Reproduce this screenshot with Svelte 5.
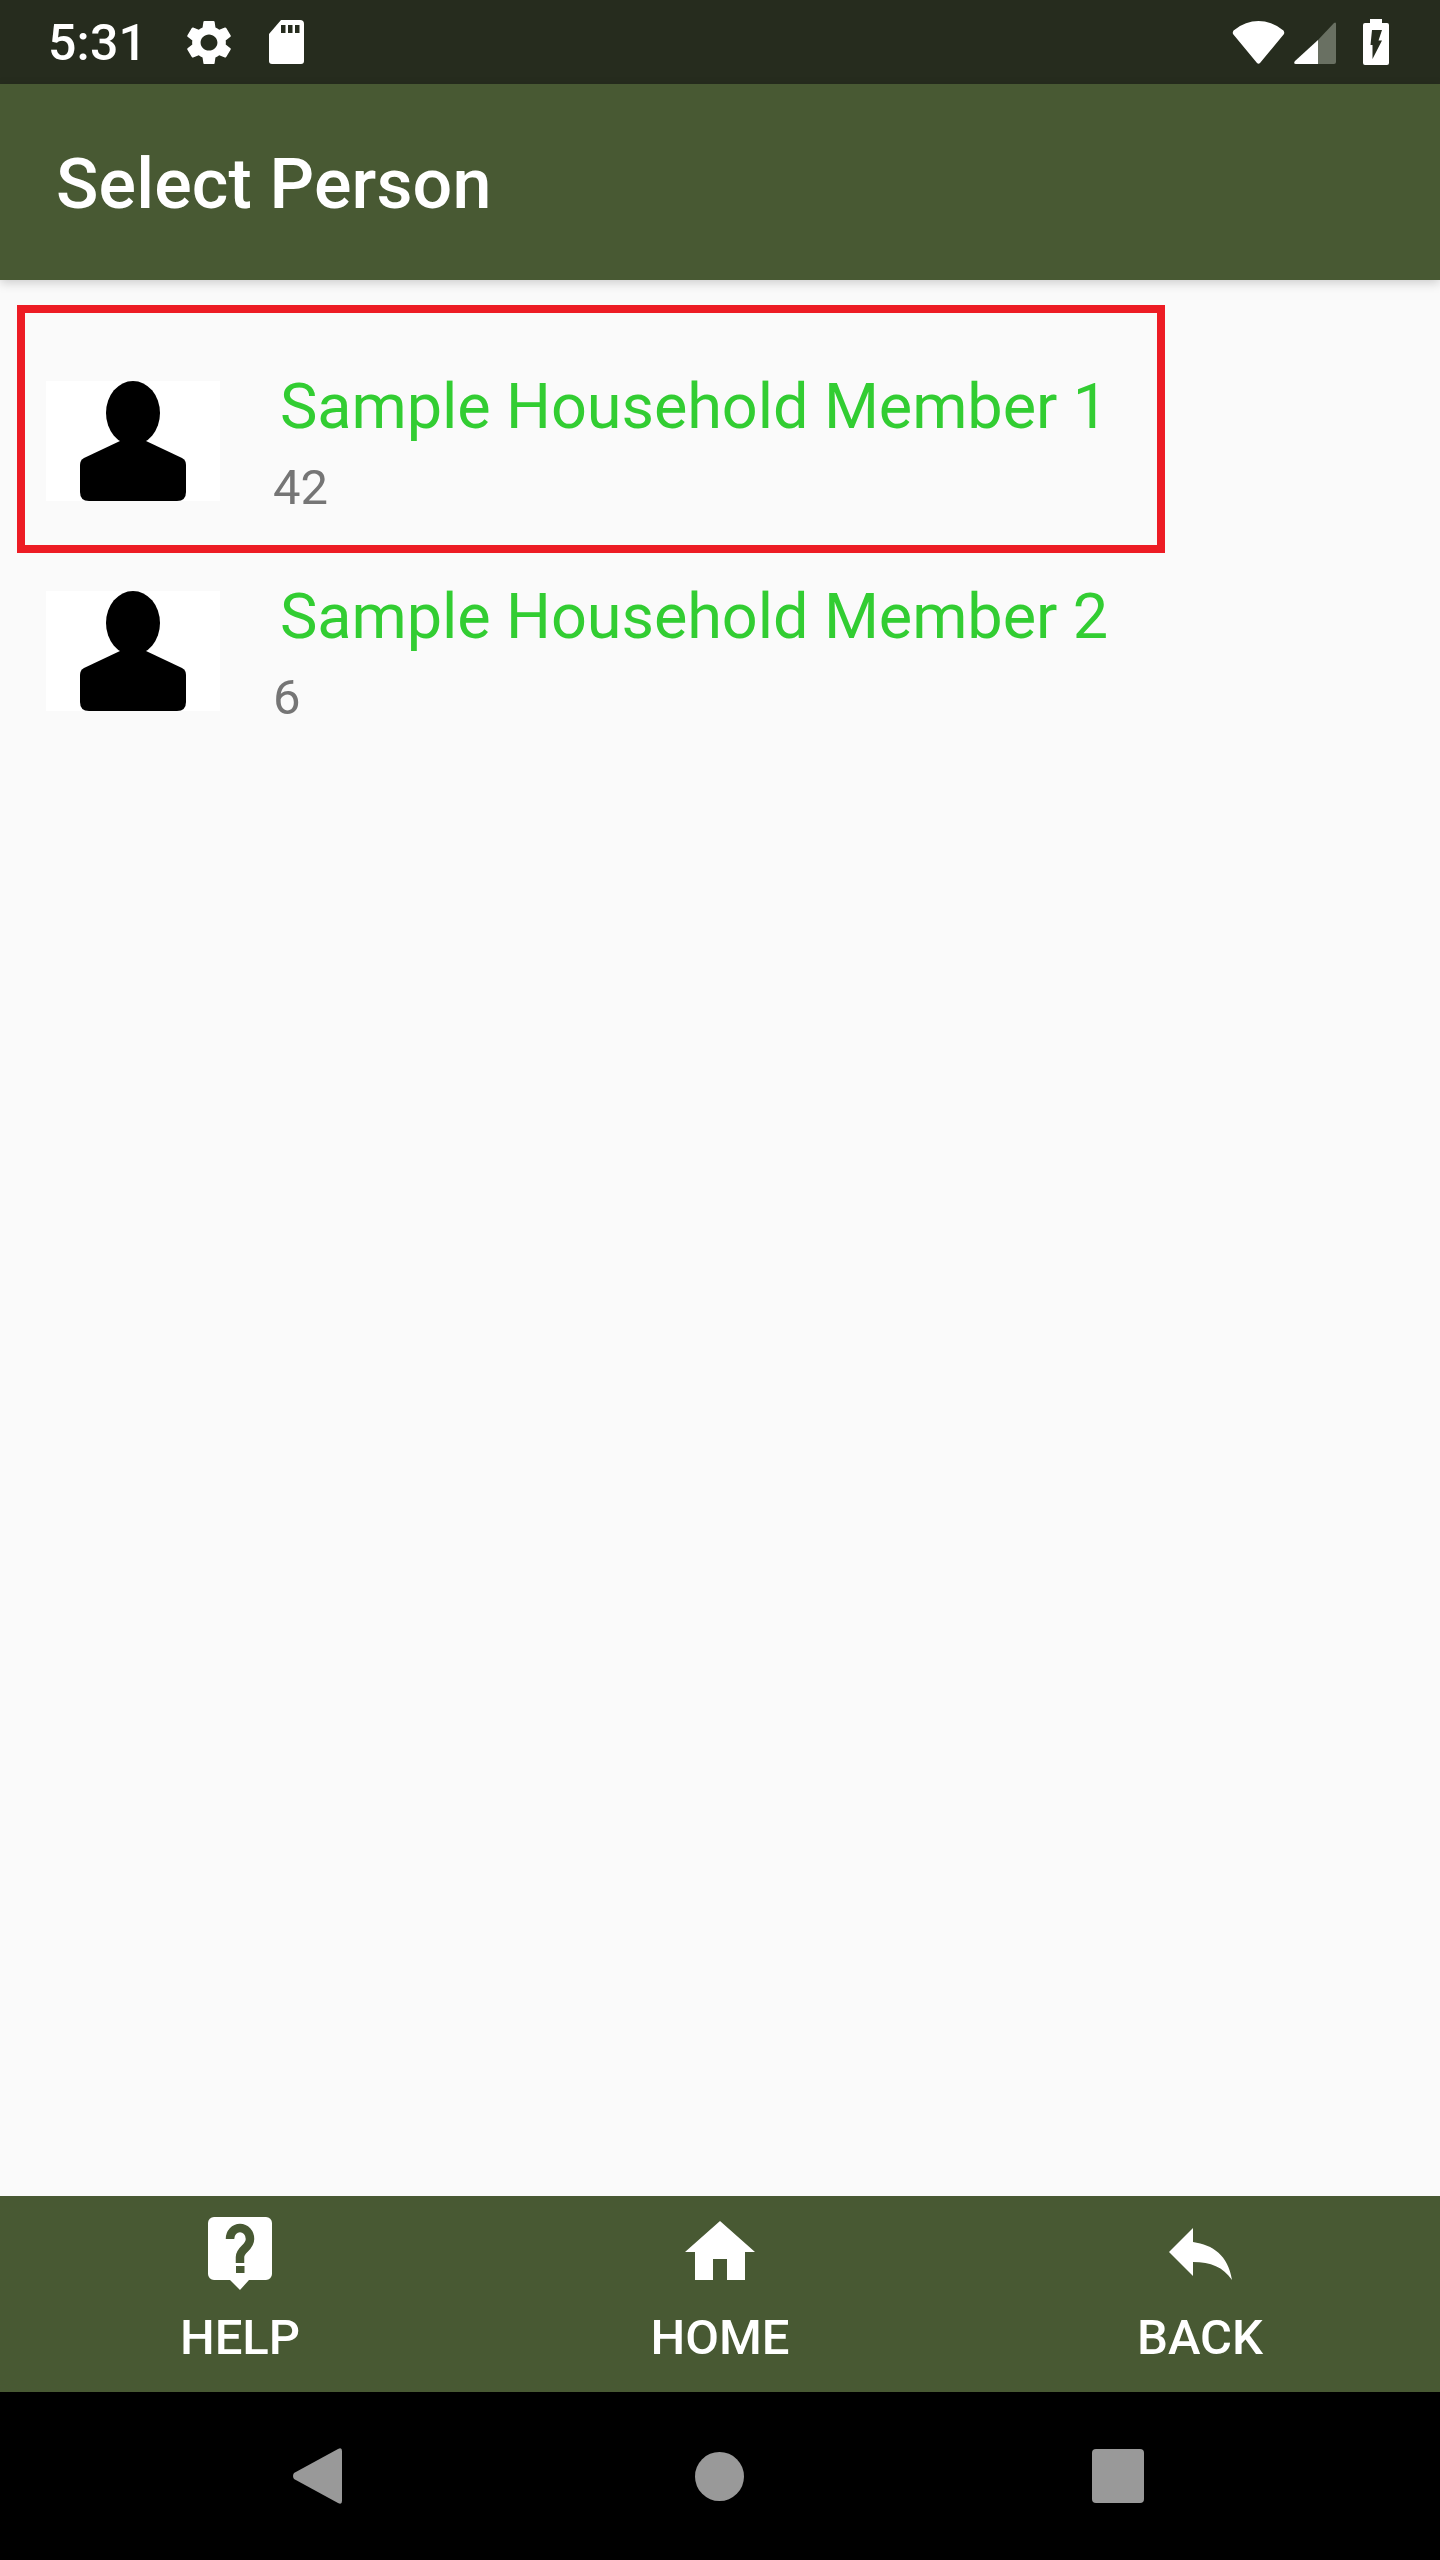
<script>
  const people = [
    { name: 'Sample Household Member 1', age: '42' },
    { name: 'Sample Household Member 2', age: '6' }
  ];
</script>

<div class="screen">
  <header class="status">
    <span class="time">5:31</span>
    <svg class="gear" width="44" height="45" viewBox="2.6 2 18.8 20" preserveAspectRatio="none"><path fill="#fff" d="M19.14 12.94c.04-.3.06-.61.06-.94 0-.32-.02-.64-.07-.94l2.03-1.58c.18-.14.23-.41.12-.61l-1.92-3.32c-.12-.22-.37-.29-.59-.22l-2.39.96c-.5-.38-1.03-.7-1.62-.94l-.36-2.54c-.04-.24-.24-.41-.48-.41h-3.84c-.24 0-.43.17-.47.41l-.36 2.54c-.59.24-1.13.57-1.62.94l-2.39-.96c-.22-.08-.47 0-.59.22L2.74 8.87c-.12.21-.08.47.12.61l2.03 1.58c-.05.3-.09.63-.09.94s.02.64.07.94l-2.03 1.58c-.18.14-.23.41-.12.61l1.92 3.32c.12.22.37.29.59.22l2.39-.96c.5.38 1.03.7 1.62.94l.36 2.54c.05.24.24.41.48.41h3.84c.24 0 .44-.17.47-.41l.36-2.54c.59-.24 1.13-.56 1.62-.94l2.39.96c.22.08.47 0 .59-.22l1.92-3.32c.12-.22.07-.47-.12-.61l-2.01-1.58zM12 15.6c-1.98 0-3.6-1.62-3.6-3.6s1.62-3.6 3.6-3.6 3.6 1.62 3.6 3.6-1.62 3.6-3.6 3.6z"/></svg>
    <svg class="sd" width="35" height="44" viewBox="0 0 35 44"><path fill="#fff" d="M12 0H31a4 4 0 0 1 4 4V41a3 3 0 0 1-3 3H3a3 3 0 0 1-3-3V14Z"/><path fill="#262c1e" d="M12 5h4.500v8H12zM19 5h4.500v8H19zM26 5h4.500v8H26z"/></svg>
    <div class="status-right">
      <svg class="wifi" width="53" height="43" viewBox="0 0 53 43"><path fill="#fff" d="M1 13Q0 10 3 8.500A37 37 0 0 1 50 8.500Q53 10 52 13L28 42Q26.500 43.500 25 42Z"/></svg>
      <svg class="signal" width="42" height="42" viewBox="0 0 42 42"><path fill="#fff" d="M24 18V42H2Q-1 42 1 39Z"/><path fill="#697062" d="M24 18L40 1Q42 -.5 42 2V40Q42 42 40 42H24Z"/></svg>
      <svg class="battery" width="26" height="46" viewBox="0 0 26 46"><path fill="#fff" d="M7 0H19V4H24a2 2 0 0 1 2 2V44a2 2 0 0 1-2 2H2a2 2 0 0 1-2-2V6a2 2 0 0 1 2-2H7Z"/><path fill="#262c1e" d="M9 11H19L15.500 21.500H19L9.500 40V26H7.500Z"/></svg>
    </div>
  </header>

  <div class="appbar"><h1>Select Person</h1></div>

  <main class="list">
    <div class="highlight"></div>
    {#each people as p}
      <div class="row">
        <svg class="avatar" width="174" height="120" viewBox="0 0 174 120">
          <rect width="174" height="120" fill="#fff"/>
          <ellipse cx="87" cy="32" rx="27" ry="32"/>
          <path d="M74 60L38 77Q34 79 34 84V111Q34 120 43 120H131Q140 120 140 111V84Q140 79 136 77L100 60Z"/>
        </svg>
        <div class="info">
          <div class="name">{p.name}</div>
          <div class="age">{p.age}</div>
        </div>
      </div>
    {/each}
  </main>

  <nav class="tabs">
    <button class="tab">
      <svg width="64" height="73" viewBox="0 0 64 73">
        <path fill="#fff" d="M6 0H58a6 6 0 0 1 6 6V57a6 6 0 0 1-6 6H41L32 73 22 63H6a6 6 0 0 1-6-6V6a6 6 0 0 1 6-6Z"/>
        <path fill="none" stroke="#485933" stroke-width="8.500" d="M22 22a10 11 0 0 1 20 0c0 9-10 10-10 18v6"/>
        <path fill="#485933" d="M28 49h8.500v7H28z"/>
      </svg>
      <span>HELP</span>
    </button>
    <button class="tab">
      <svg width="70" height="73" viewBox="0 0 70 73">
        <path fill="#fff" d="M35 4L70 35H60V63H42V42H28V63H10V35H0Z"/>
      </svg>
      <span>HOME</span>
    </button>
    <button class="tab">
      <svg width="63" height="73" viewBox="0 0 63 73">
        <path fill="#fff" d="M24 11V25C44 28 59 38 63 63 54 50 42 45 24 45V59L0 35Z"/>
      </svg>
      <span>BACK</span>
    </button>
  </nav>

  <footer class="sysnav">
    <svg class="back" width="49" height="56" viewBox="0 0 49 56"><path fill="#999" d="M1 31Q-1 28 1 25L45 1Q49 -1 49 3V53Q49 57 45 55Z" /></svg>
    <svg class="home" width="49" height="49" viewBox="0 0 49 49"><circle cx="24.500" cy="24.500" r="24.500" fill="#999"/></svg>
    <div class="recent"></div>
  </footer>
</div>

<style>
  :global(body) { margin: 0; background: #fafafa; }
  * { box-sizing: border-box; }
  .screen {
    width: 1440px;
    height: 2560px;
    display: flex;
    flex-direction: column;
    font-family: Roboto, "Liberation Sans", sans-serif;
    background: #fafafa;
    overflow: hidden;
  }
  svg { display: block; flex: none; }

  .status {
    height: 84px;
    flex: none;
    background: #262c1e;
    display: flex;
    align-items: center;
    padding: 0 51px;
    color: #fff;
  }
  .time { font-size: 50px; line-height: 58px; font-weight: 500; width: 136px; margin: 2px 0 0 -3px; flex: none; letter-spacing: 0.2px; }
  .gear { margin-left: 3px; }
  .sd { margin-left: 38px; }
  .status-right { margin-left: auto; display: flex; align-items: center; }
  .signal { margin-left: 9px; margin-top: 2px; }
  .battery { margin-left: 27px; }

  .appbar {
    height: 196px;
    flex: none;
    background: #485933;
    display: flex;
    align-items: center;
    padding: 4px 0 0 56px;
    box-shadow: 0 3px 10px rgba(0, 0, 0, 0.18);
    position: relative;
    z-index: 1;
  }
  h1 { margin: 0; font-size: 70px; line-height: 82px; font-weight: 500; color: #fff; letter-spacing: 0.15px; }

  .list { flex: 1; position: relative; padding-top: 101px; }
  .highlight {
    position: absolute;
    left: 17px;
    top: 25px;
    width: 1148px;
    height: 248px;
    border: 8px solid #ed1c24;
  }
  .row { height: 210px; display: flex; padding-left: 46px; }
  .info { margin-left: 53px; margin-top: -11px; }
  .name { font-size: 63px; line-height: 74px; color: #32cd32; padding-left: 7px; letter-spacing: -0.08px; }
  .age { font-size: 49px; line-height: 57px; color: #757575; margin-top: 15px; }

  .tabs {
    height: 196px;
    flex: none;
    background: #485933;
    display: grid;
    grid-template-columns: repeat(3, 1fr);
  }
  .tab {
    background: none;
    border: 0;
    padding: 21px 0 0;
    margin: 0;
    display: flex;
    flex-direction: column;
    align-items: center;
    font: inherit;
    color: #fff;
  }
  .tab span { font-size: 49px; line-height: 57px; font-weight: 500; margin-top: 19px; }

  .sysnav {
    height: 168px;
    flex: none;
    background: #000;
    display: flex;
    align-items: center;
    padding-left: 293px;
  }
  .home { margin-left: 353px; }
  .recent {
    width: 52px;
    height: 54px;
    margin-left: 348px;
    border-radius: 4px;
    background: #999;
  }
</style>
